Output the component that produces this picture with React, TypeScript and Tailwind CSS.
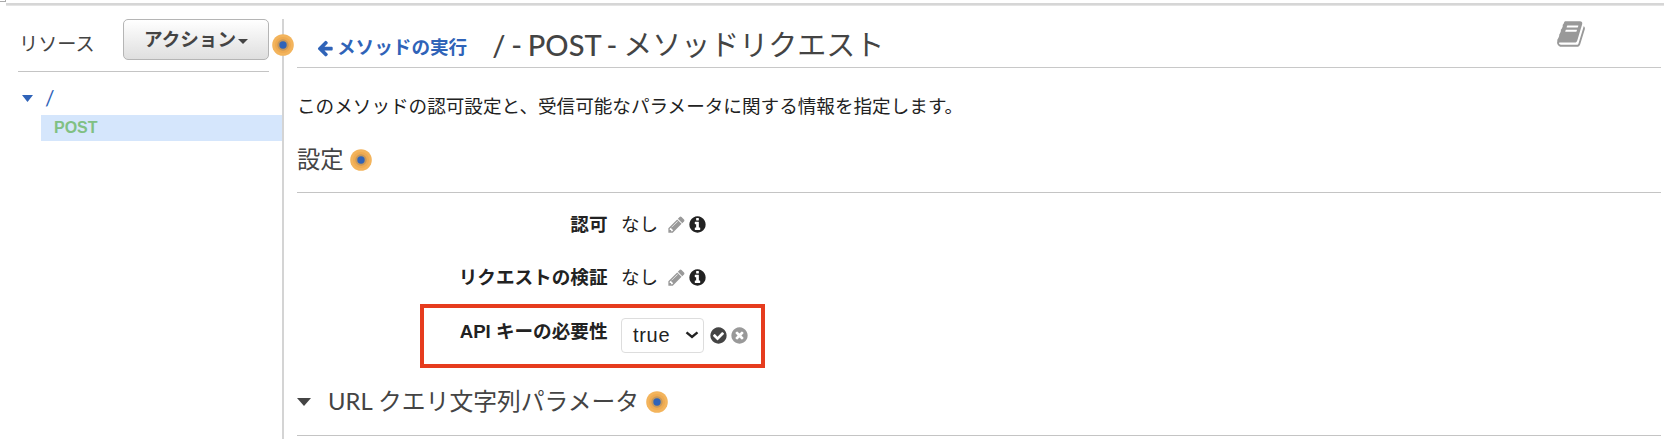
import React from "react";

const CIRCLE =
  "M1664 896q0 209-103 385.5t-279.5 279.5-385.5 103-385.5-103-279.5-279.5-103-385.5 103-385.5 279.5-279.5 385.5-103 385.5 103 279.5 279.5 103 385.5z";

const PATHS = {
  book: "M1703 478q40 57 18 129l-275 906q-19 64-76.5 107.5t-122.5 43.5h-923q-77 0-148.5-53.5t-99.5-131.5q-24-67-2-127 0-4 3-27t4-37q1-8-3-21.5t-3-19.5q2-11 8-21t16.5-23.5 16.5-23.5q23-38 45-91.5t30-91.5q3-10 .5-30t-.5-28q3-11 17-28t17-23q21-36 42-92t25-90q1-9-2.5-32t.5-28q4-13 22-30.5t22-22.5q19-26 42.5-84.5t27.5-96.5q1-8-3-25.5t-2-26.5q2-8 9-18t18-23 17-21q8-12 16.5-30.5t15-35 16-36 19.5-32 26.5-23.5 36-11.5 47.5 5.5l-1 3q38-9 51-9h761q74 0 114 56t18 130l-274 906q-36 119-71.5 153.5t-128.5 34.5h-869q-27 0-38 15-11 16-1 43 24 70 144 70h923q29 0 56-15.5t35-41.5l300-987q7-22 5-57 38 15 59 43zm-1064 2q-4 13 2 22.5t20 9.5h608q13 0 25.5-9.5t16.5-22.5l21-64q4-13-2-22.5t-20-9.5h-608q-13 0-25.5 9.5t-16.5 22.5zm-83 256q-4 13 2 22.5t20 9.5h608q13 0 25.5-9.5t16.5-22.5l21-64q4-13-2-22.5t-20-9.5h-608q-13 0-25.5 9.5t-16.5 22.5z",
  pencil:
    "M491 1536l91-91-235-235-91 91v107h128v128h107zm523-928q0-22-22-22-10 0-17 7l-542 542q-7 7-7 17 0 22 22 22 10 0 17-7l542-542q7-7 7-17zm-54-192l416 416-832 832h-416v-416zm683 96q0 53-37 90l-166 166-416-416 166-165q36-38 90-38 53 0 91 38l235 234q37 39 37 91z",
  info:
    CIRCLE +
    "M1152 1376v-160q0-14-9-23t-23-9h-96v-512q0-14-9-23t-23-9h-320q-14 0-23 9t-9 23v160q0 14 9 23t23 9h96v320h-96q-14 0-23 9t-9 23v160q0 14 9 23t23 9h448q14 0 23-9t9-23zM1024 480v-160q0-14-9-23t-23-9h-192q-14 0-23 9t-9 23v160q0 14 9 23t23 9h192q14 0 23-9t9-23z",
  check:
    CIRCLE +
    "M1412 734q0-28-18-46l-91-90q-19-19-45-19t-45 19l-408 407-226-226q-19-19-45-19t-45 19l-91 90q-18 18-18 46 0 27 18 45l362 362q19 19 45 19 27 0 46-19l543-543q18-18 18-45z",
  times:
    CIRCLE +
    "M1277 1122q0-26-19-45l-181-181 181-181q19-19 19-45 0-27-19-46l-90-90q-19-19-46-19-26 0-45 19l-181 181-181-181q-19-19-45-19-27 0-46 19l-90 90q-19 19-19 46 0 26 19 45l181 181-181 181q-19 19-19 45 0 27 19 46l90 90q19 19 46 19 26 0 45-19l181-181 181 181q19 19 45 19 27 0 46-19l90-90q19-19 19-46z",
  arrow:
    "M1664 896v128q0 53-32.5 90.5t-84.5 37.5h-704l293 294q38 36 38 90t-38 90l-75 76q-37 37-90 37-52 0-91-37l-651-652q-37-37-37-90 0-52 37-91l651-650q38-38 91-38 52 0 90 38l75 74q38 38 38 91t-38 91l-293 293h704q52 0 84.5 37.5t32.5 90.5z",
};

function Icon({ name, className }: { name: keyof typeof PATHS; className: string }) {
  return (
    <svg viewBox="0 0 1792 1792" fill="currentColor" fillRule="evenodd" className={"shrink-0 " + className}>
      <path d={PATHS[name]} />
    </svg>
  );
}

function HelpDot({ className = "" }: { className?: string }) {
  return (
    <svg viewBox="0 0 22 22" className={"size-[22px] shrink-0 " + className}>
      <circle cx="11" cy="11" r="10.8" fill="#f3b45c" />
      <circle cx="11" cy="11" r="8" fill="#eeaa51" />
      <circle cx="11" cy="11" r="5.7" fill="#c6985a" />
      <circle cx="11" cy="11" r="3.7" fill="#2f63b8" />
    </svg>
  );
}

function Caret({ className }: { className: string }) {
  return (
    <svg viewBox="0 0 14 8" preserveAspectRatio="none" fill="currentColor" className={"shrink-0 " + className}>
      <path d="M0 0h14L7 8z" />
    </svg>
  );
}

function SettingRow({ label }: { label: string }) {
  return (
    <div className="flex h-[53px] items-center text-[18.6px]">
      <div className="w-[310.5px] text-right font-bold">{label}</div>
      <div className="ml-[13.5px] w-[45px]">なし</div>
      <Icon name="pencil" className="ml-px size-[19px] text-[#999]" />
      <Icon name="info" className="ml-[2px] size-[19px] text-[#222]" />
    </div>
  );
}

export default function App() {
  return (
    <div className="flex h-[439px] w-[1664px] flex-col overflow-hidden bg-white font-['Liberation_Sans','Noto_Sans_CJK_JP',sans-serif] whitespace-nowrap text-[#222]">
      <div className="flex h-[19px] shrink-0">
        <div className="h-[2px] w-[6px] border-r border-b border-[#aaa]" />
        <div className="mt-[3px] h-[3px] flex-1 border-b border-[#e4e4e4] bg-[#d6d6d6]" />
      </div>
      <div className="flex min-h-0 flex-1">
        <aside className="relative w-[284px] shrink-0 border-r-2 border-[#d4d4d4]">
          <div className="ml-[18px] flex h-[53px] w-[251px] items-start justify-between border-b border-[#c4c4c4]">
            <span className="pt-[12px] pl-px text-[19.2px] leading-[28px] text-[#444]">リソース</span>
            <button className="flex h-[41px] w-[146px] items-center justify-center rounded-[5px] border border-[#b5b5b5] bg-linear-to-b from-white to-[#dfdfdf] text-[18.6px] font-bold text-[#444]">
              アクション
              <Caret className="ml-[2px] mt-[3px] h-[5px] w-[10px]" />
            </button>
          </div>
          <div className="flex h-[43px] items-center pt-[9px] pl-[22px] text-[#2f63b8]">
            <Caret className="h-[7px] w-[11px]" />
            <span className="ml-[12px] font-['Lato',sans-serif] text-[21px] leading-[24px]">/</span>
          </div>
          <div className="ml-[41px] flex h-[26px] items-center bg-[#d5e6fc] pl-[13px] text-[16px] font-bold text-[#80c083]">
            POST
          </div>
          <HelpDot className="absolute top-[15px] right-[-12px]" />
        </aside>

        <main className="ml-[13px] w-[1364px] shrink-0">
          <header className="flex h-[49px] items-center border-b border-[#c8c8c8]">
            <a className="ml-[19px] flex items-center pt-[9px] text-[18.6px] leading-[28px] font-bold text-[#2f63b8]">
              <Icon name="arrow" className="mr-[3px] size-[18px]" />
              メソッドの実行
            </a>
            <h1 className="ml-[25px] flex pt-[4px] font-['Lato','Noto_Sans_CJK_JP',sans-serif] text-[29px] leading-[40px] text-[#444]">
              <span className="font-medium [word-spacing:-1.5px] whitespace-pre">/ - POST - </span>
              <span>メソッドリクエスト</span>
            </h1>
            <Icon name="book" className="mr-[75px] mb-[18px] ml-auto size-[30px] text-[#999]" />
          </header>
          <p className="mt-[25px] text-[18.6px] leading-[28px]">
            このメソッドの認可設定と、受信可能なパラメータに関する情報を指定します。
          </p>
          <h2 className="flex h-[72px] items-center border-b border-[#c4c4c4] pt-[7px] text-[23.3px] text-[#444]">
            <span>設定</span>
            <HelpDot className="ml-[6px]" />
          </h2>
          <div className="pt-[5px]">
            <SettingRow label="認可" />
            <SettingRow label="リクエストの検証" />
            <div className="ml-[123px] flex h-[64px] w-[345px] items-start border-4 border-[#e63c1e]">
              <div className="w-[183.5px] pt-[10px] text-right text-[18.6px] leading-[28px] font-bold">
                API キーの必要性
              </div>
              <div className="mt-[10px] ml-[13.5px] flex h-[35px] w-[83px] items-center justify-between rounded-[4px] border border-[#ddd] pr-[4px] pb-px pl-[11px] font-['Liberation_Sans',sans-serif] text-[20px] tracking-[0.7px]">
                true
                <svg viewBox="0 0 14 8" className="h-[8px] w-[14px]" fill="none" stroke="currentColor" strokeWidth="2.4">
                  <path d="M1.5 1.3L7 6l5.5-4.7" />
                </svg>
              </div>
              <Icon name="check" className="mt-[18px] ml-[5px] size-[19px] text-[#444]" />
              <Icon name="times" className="mt-[18px] ml-[2px] size-[19px] text-[#999]" />
            </div>
          </div>
          <h2 className="flex h-[68px] items-center border-b border-[#c4c4c4] font-['Lato','Noto_Sans_CJK_JP',sans-serif] text-[23.8px] text-[#444]">
            <Caret className="h-[8px] w-[14px]" />
            <span className="ml-[17px]">URL クエリ文字列パラメータ</span>
            <HelpDot className="ml-[7px]" />
          </h2>
        </main>
      </div>
    </div>
  );
}
